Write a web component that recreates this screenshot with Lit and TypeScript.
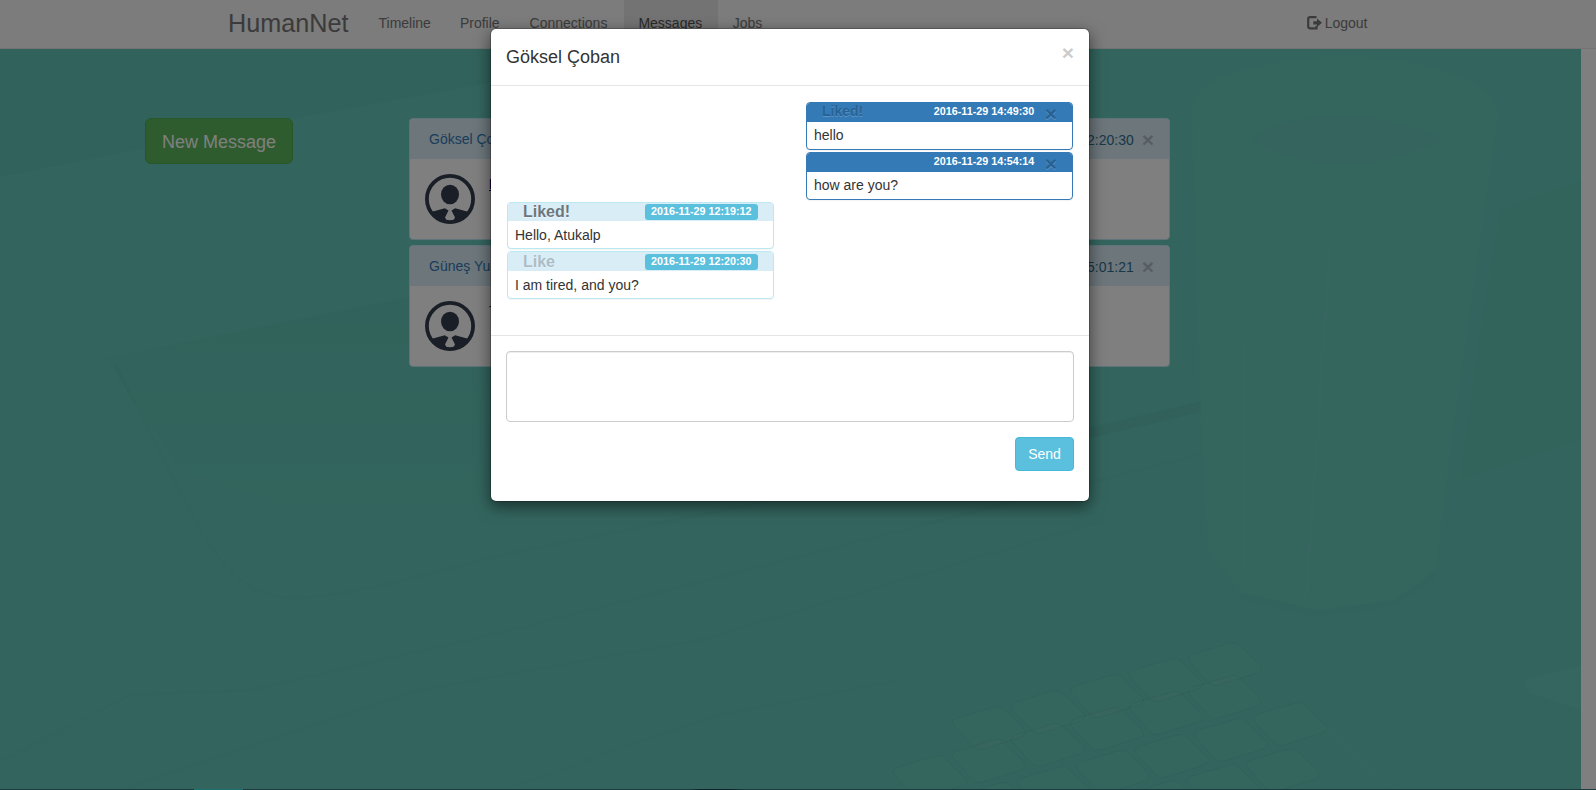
import { LitElement, html, css, svg } from "lit";
import { customElement } from "lit/decorators.js";

interface Thread { name: string; date: string; preview: string; unread: boolean }
interface Message { text: string; date: string; like: string; mine: boolean }

const threads: Thread[] = [
  { name: "Göksel Çoban", date: "2016-11-29 12:20:30", preview: "I am tired, and you?", unread: true },
  { name: "Güneş Yurt", date: "2016-11-28 15:01:21", preview: "Thanks", unread: false },
];

const messages: Message[] = [
  { text: "hello", date: "2016-11-29 14:49:30", like: "Liked!", mine: true },
  { text: "how are you?", date: "2016-11-29 14:54:14", like: "", mine: true },
  { text: "Hello, Atukalp", date: "2016-11-29 12:19:12", like: "Liked!", mine: false },
  { text: "I am tired, and you?", date: "2016-11-29 12:20:30", like: "Like", mine: false },
];

@customElement("desk-scene")
export class DeskScene extends LitElement {
  static styles = css`
    :host { display: block; }
    svg { display: block; }
  `;

  // One row of keyboard keys, stepping along the slope of the desk
  private keys(x: number, y: number, count: number) {
    return Array.from({ length: count }, (_, i) => svg`
      <path transform="translate(${x + i * 59} ${y - i * 16})"
        d="M1 10 Q-1 5 5 3 L42 -8 Q48 -10 52 -6 L72 14 Q76 19 69 22 L31 34 Q25 36 21 32 Z"/>`);
  }

  render() {
    return html`
      <svg width="1581" height="741" viewBox="0 49 1581 741" preserveAspectRatio="none">
        <defs>
          <linearGradient id="d" x1="0" y1="0" x2="0" y2="1">
            <stop offset="0" stop-color="#000" stop-opacity=".035"/>
            <stop offset="1" stop-color="#000" stop-opacity="0"/>
          </linearGradient>
        </defs>
        <rect y="49" width="1581" height="741" fill="#66cbbc"/>
        <path d="M0 49H680L490 83L292 119L0 177Z" fill="#000" opacity=".03"/>
        <path d="M105 358L409 297L560 270V500L330 520L180 470Z" fill="url(#d)"/>
        <g fill="none" stroke="#000" stroke-opacity=".02" stroke-width="3">
          <path d="M115 365L190 510Q232 598 290 598Q340 600 500 555L800 495L1201 402"/>
          <path d="M0 762L130 695L250 690L500 633L1201 454"/>
          <path d="M120 790L420 690L700 640L1105 520"/>
          <path d="M500 790L720 715L900 680"/>
        </g>
        <path d="M1085 430L1201 402V412L1085 440Z" fill="#000" opacity=".035"/>
        <path d="M1500 210L1581 180V440L1460 480L1480 330Z" fill="#000" opacity=".012"/>
        <path d="M1192 105Q1200 65 1345 55Q1490 65 1498 115L1450 450L1436 570L1394 600L1320 610L1243 593L1208 550L1200 400Z" fill="#fff" opacity=".028"/>
        <path d="M1250 135Q1340 95 1445 138Q1400 165 1340 164Q1270 162 1250 135Z" fill="#000" opacity=".012"/>
        <path d="M1243 593L1320 610L1394 600L1436 570V580L1390 608L1315 616L1240 600Z" fill="#000" opacity=".02"/>
        <path d="M1245 570L1245 340M1306 600L1330 250" fill="none" stroke="#fff" stroke-opacity=".025" stroke-width="3"/>
        <g fill="#fff" fill-opacity=".026" stroke="#000" stroke-opacity=".05">
          ${this.keys(952, 715, 5)}
          ${this.keys(893, 764, 6)}
          ${this.keys(899, 807, 7)}
          ${this.keys(1069, 805, 4)}
        </g>
        <path d="M1290 697L1395 790" stroke="#fff" stroke-opacity=".05" fill="none"/>
        <path d="M1525 680L1581 665V710L1530 693Q1523 690 1525 680Z" fill="#fff" opacity=".03"/>
      </svg>`;
  }
}

@customElement("thread-card")
export class ThreadCard extends LitElement {
  static properties = { thread: { attribute: false } };
  declare thread: Thread;

  static styles = css`
    :host {
      display: block; box-sizing: border-box; height: 122px; background: #fff;
      border: 1px solid #bce8f1; border-radius: 4px; overflow: hidden;
    }
    .head {
      height: 40px; padding: 0 15px 0 19px; display: flex; align-items: center;
      justify-content: space-between; background: #d9edf7; color: #31708f; white-space: nowrap;
    }
    .name { color: #337ab7; }
    .when { display: flex; align-items: center; padding-top: 2px; }
    .x { font-size: 21px; line-height: 20px; font-weight: bold; color: #000; opacity: .2; margin-left: 8px; }
    .body { padding: 15px; display: flex; gap: 14px; }
    .text { white-space: nowrap; }
    .unread { color: #00008b; text-decoration: underline; font-weight: bold; }
  `;

  render() {
    const t = this.thread;
    return html`
      <div class="head">
        <span class="name">${t.name}</span>
        <span class="when">${t.date}<span class="x">×</span></span>
      </div>
      <div class="body">
        <svg width="50" height="50" viewBox="0 0 50 50">
          <circle cx="25" cy="25" r="23.1" fill="none" stroke="#343f4e" stroke-width="3.8"/>
          <ellipse cx="25" cy="20.5" rx="9" ry="9.8" fill="#343f4e"/>
          <path d="M7 37.8L19.8 34.3L23.5 36.6L20 43.5L23.6 49.5Q13 48.5 5 39ZM43 37.8L30.2 34.3L26.5 36.6L30 43.5L26.4 49.5Q37 48.5 45 39Z" fill="#343f4e"/>
        </svg>
        <span class="text ${t.unread ? "unread" : ""}">${t.preview}</span>
      </div>`;
  }
}

@customElement("chat-bubble")
export class ChatBubble extends LitElement {
  static properties = { message: { attribute: false } };
  declare message: Message;

  static styles = css`
    :host { display: block; }
    .card {
      box-sizing: border-box; height: 47px; width: 267px; background: #fff;
      border: 1px solid #bce8f1; border-radius: 4px; box-shadow: 0 1px 1px rgba(0,0,0,.05);
    }
    .head {
      box-sizing: border-box; height: 18px; padding: 0 15px; background: #d9edf7;
      border-radius: 3px 3px 0 0; display: flex; justify-content: space-between; align-items: flex-start;
    }
    .mine { border-color: #337ab7; height: 48px; }
    .mine .head { background: #337ab7; height: 19px; }
    .like { font-weight: bold; font-size: 16px; line-height: 18px; color: #000; opacity: .5; text-shadow: 0 1px 0 #fff; }
    .like.off { opacity: .2; line-height: 20px; }
    .mine .like { font-size: 14px; line-height: 17px; opacity: .2; }
    .right { display: flex; }
    .date {
      height: 16px; margin-top: 1px; padding: 0 6.5px; border-radius: 3px; background: #5bc0de; color: #fff;
      font-size: 10.75px; font-weight: bold; line-height: 15px; white-space: nowrap;
    }
    .mine .date { background: none; margin-top: 0; line-height: 16px; }
    .x { font-size: 21px; line-height: 22px; font-weight: bold; color: #000; opacity: .2; text-shadow: 0 1px 0 #fff; margin-left: 4px; }
    .text { padding: 4px 7px; line-height: 20px; color: #333; }
    .mine .text { padding-top: 3px; }
    .late { height: 48px; margin-top: -1px; }
    .late .head { height: 19px; }
    .late .date { margin-top: 2px; }
  `;

  render() {
    const m = this.message;
    return html`
      <div class="card ${m.mine ? "mine" : m.like === "Like" ? "late" : ""}">
        <div class="head">
          <span class="like ${m.like === "Like" ? "off" : ""}">${m.like}</span>
          <span class="right"><span class="date">${m.date}</span>${m.mine ? html`<span class="x">×</span>` : ""}</span>
        </div>
        <div class="text">${m.text}</div>
      </div>`;
  }
}

@customElement("app-root")
export class AppRoot extends LitElement {
  static styles = css`
    :host {
      display: block; position: relative; width: 1596px; height: 790px; overflow: hidden; background: #fff;
      font: 14px/20px "Liberation Sans", Arial, sans-serif; color: #333;
    }
    .nav {
      box-sizing: border-box; height: 49px; padding: 0 228px 0 228px; background: #f8f8f8;
      border-bottom: 1px solid #e7e7e7; display: flex; color: #777; line-height: 46px;
    }
    .brand { font-size: 25.2px; width: 135.5px; }
    .item { padding: 0 15px; height: 48px; }
    .item:nth-child(2) { padding-right: 14px; }
    .item:nth-child(4) { padding-right: 16.5px; }
    .active { background: #e7e7e7; color: #555; padding: 0 15.5px 0 14.5px; }
    .logout { margin-left: auto; display: flex; align-items: center; gap: 3px; height: 46px; padding-right: .5px; }
    .stage { position: relative; height: 741px; }
    .scene { position: absolute; left: 0; top: 0; }
    .content { position: relative; display: flex; align-items: flex-start; padding: 69px 0 0 145px; gap: 116px; }
    .new {
      box-sizing: border-box; width: 148px; height: 46px; border: 1px solid #4cae4c; border-radius: 6px;
      background: #5cb85c; color: #fff; font: 18px/24px "Liberation Sans", Arial, sans-serif; padding: 2px 0 0;
    }
    .threads { width: 761px; display: grid; gap: 5px; }
    .backdrop { position: absolute; inset: 0; background: rgba(0,0,0,.5); display: flex; justify-content: center; align-items: flex-start; padding: 28px 16px 0 0; }
    .strip { position: absolute; left: 0; bottom: 0; width: 100%; height: 1px; background: linear-gradient(90deg, #1d3a40 0 194px, #187070 194px 243px, #1d3a40 243px 690px, #0c222c 700px 730px, #1d3a40 745px 100%); }
    .modal {
      box-sizing: border-box; width: 600px; height: 474px; background: #fff; background-clip: padding-box;
      border: 1px solid rgba(0,0,0,.2); border-radius: 6px; box-shadow: 0 5px 15px rgba(0,0,0,.5);
    }
    .title {
      box-sizing: border-box; height: 57px; padding: 15px; border-bottom: 1px solid #e5e5e5;
      display: flex; justify-content: space-between; font-size: 18px; line-height: 27px;
    }
    .close { font-size: 21px; line-height: 17px; font-weight: bold; color: #000; opacity: .2; }
    .chat { box-sizing: border-box; height: 249px; padding: 16px 16px 0; display: grid; grid-auto-rows: 50px; grid-template-columns: 267px 267px; justify-content: space-between; align-content: start; }
    .mine { grid-column: 2; }
    .theirs { grid-column: 1; }
    .foot { border-top: 1px solid #e5e5e5; padding: 15px; display: flex; flex-direction: column; align-items: flex-end; gap: 15px; }
    .input {
      box-sizing: border-box; width: 100%; height: 71px; border: 1px solid #ccc; border-radius: 4px;
      resize: none; box-shadow: inset 0 1px 1px rgba(0,0,0,.075); display: block; margin: 0;
    }
    .send {
      box-sizing: border-box; width: 59px; height: 34px; border: 1px solid #46b8da; border-radius: 4px;
      background: #5bc0de; color: #fff; font: 14px/20px "Liberation Sans", Arial, sans-serif; padding: 0;
    }
  `;

  render() {
    return html`
      <nav class="nav">
        <span class="brand">HumanNet</span>
        ${["Timeline", "Profile", "Connections", "Messages", "Jobs"].map(
          (n) => html`<span class="item ${n === "Messages" ? "active" : ""}">${n}</span>`)}
        <span class="logout">
          <svg width="15" height="14" viewBox="0 0 15 14">
            <path d="M9.5 1.2H3.2Q1.2 1.2 1.2 3.2V10.3Q1.2 12.3 3.2 12.3H9.5V9.8" fill="none" stroke="#777" stroke-width="2.2"/>
            <path d="M6.3 5.2H10V2.6L15 6.8L10 11V8.4H6.3Z" fill="#777"/>
          </svg>Logout</span>
      </nav>
      <div class="stage">
        <desk-scene class="scene"></desk-scene>
        <div class="content">
          <button class="new">New Message</button>
          <div class="threads">${threads.map((t) => html`<thread-card .thread=${t}></thread-card>`)}</div>
        </div>
      </div>
      <div class="backdrop">
        <section class="modal">
          <header class="title"><span>Göksel Çoban</span><span class="close">×</span></header>
          <div class="chat">
            ${messages.map((m) => html`<chat-bubble class=${m.mine ? "mine" : "theirs"} .message=${m}></chat-bubble>`)}
          </div>
          <footer class="foot">
            <textarea class="input"></textarea>
            <button class="send">Send</button>
          </footer>
        </section>
      </div>
      <div class="strip"></div>`;
  }
}
